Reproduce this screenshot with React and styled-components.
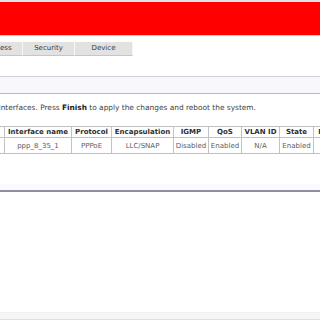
import React from "react";
import styled, { createGlobalStyle } from "styled-components";

const Global = createGlobalStyle`
  html, body { margin: 0; padding: 0; background: #ffffff; overflow: hidden; }
  body { width: 320px; height: 320px; font-family: "DejaVu Sans", Verdana, sans-serif; }
`;

const Page = styled.div`
  width: 320px;
  height: 320px;
  display: flex;
  flex-direction: column;
  overflow: hidden;
`;

const TopStrip = styled.div`
  height: 2px;
  background: #e2e2e2;
`;

const Banner = styled.div`
  height: 33px;
  background: #fe0000;
  border-bottom: 1px solid #f4c4c4;
`;

const TabBar = styled.div`
  display: flex;
  margin-top: 6px;
  margin-left: -28px;
  height: 14px;
`;

const Tab = styled.div`
  width: ${(p) => p.$w}px;
  height: 13px;
  background: #e2e2e2;
  border-right: 1px solid #f6f6f6;
  border-bottom: 1px solid #c6c6c6;
  color: #3a3a3a;
  font-size: 7px;
  line-height: 13px;
  text-align: center;
  flex: none;
`;

const InfoBox = styled.div`
  margin-top: 20px;
  height: 16px;
  background: #f7f7fc;
  border-top: 1px solid #cfcfd8;
  border-bottom: 1px solid #b9b9c9;
`;

const Instruction = styled.p`
  margin: 10px 0 0 -1.5px;
  font-size: 7.4px;
  color: #404040;
  white-space: nowrap;
  line-height: 8px;
  b { color: #222; }
`;

const TableWrap = styled.div`
  margin-top: 14px;
  margin-left: -36px;
`;

const Grid = styled.table`
  border-collapse: collapse;
  table-layout: fixed;
  width: 390px;
`;

const Col = styled.col`
  width: ${(p) => p.$w}px;
`;

const Th = styled.th`
  height: 10px;
  padding: 0;
  border: 1px solid #c2c2c2;
  font-size: 7px;
  font-weight: bold;
  color: #2e2e2e;
  text-align: center;
  white-space: nowrap;
  overflow: hidden;
`;

const Td = styled.td`
  height: 15px;
  padding: 0;
  border: 1px solid #c2c2c2;
  font-size: 7px;
  color: #5c5c5c;
  text-align: center;
  white-space: nowrap;
  overflow: hidden;
`;

const FooterRule = styled.div`
  margin-top: 30px;
  height: 6px;
  background: #fafafd;
  border-bottom: 2px solid #8e8ea4;
`;

const Spacer = styled.div`
  flex: 1;
`;

const BottomBar = styled.div`
  height: 6px;
  background: #f5f5f5;
  border-top: 1px solid #f0f0f0;
  border-bottom: 1px solid #e0e0e0;
`;

const tabs = [
  { label: "Wireless", w: 50 },
  { label: "Security", w: 51 },
  { label: "Device", w: 57 },
];

const columns = [
  { label: "Service", w: 40 },
  { label: "Interface name", w: 67 },
  { label: "Protocol", w: 40 },
  { label: "Encapsulation", w: 62 },
  { label: "IGMP", w: 35 },
  { label: "QoS", w: 33 },
  { label: "VLAN ID", w: 38 },
  { label: "State", w: 34 },
  { label: "Remove", w: 41 },
];

const row = ["", "ppp_8_35_1", "PPPoE", "LLC/SNAP", "Disabled", "Enabled", "N/A", "Enabled", ""];

export default function App() {
  return (
    <>
      <Global />
      <Page>
        <TopStrip />
        <Banner />
        <TabBar>
          {tabs.map((t) => (
            <Tab key={t.label} $w={t.w}>{t.label}</Tab>
          ))}
        </TabBar>
        <InfoBox />
        <Instruction>
          Interfaces. Press <b>Finish</b> to apply the changes and reboot the system.
        </Instruction>
        <TableWrap>
          <Grid>
            <colgroup>
              {columns.map((c) => (
                <Col key={c.label} $w={c.w} />
              ))}
            </colgroup>
            <thead>
              <tr>
                {columns.map((c) => (
                  <Th key={c.label}>{c.label}</Th>
                ))}
              </tr>
            </thead>
            <tbody>
              <tr>
                {row.map((v, i) => (
                  <Td key={i}>{v}</Td>
                ))}
              </tr>
            </tbody>
          </Grid>
        </TableWrap>
        <FooterRule />
        <Spacer />
        <BottomBar />
      </Page>
    </>
  );
}
